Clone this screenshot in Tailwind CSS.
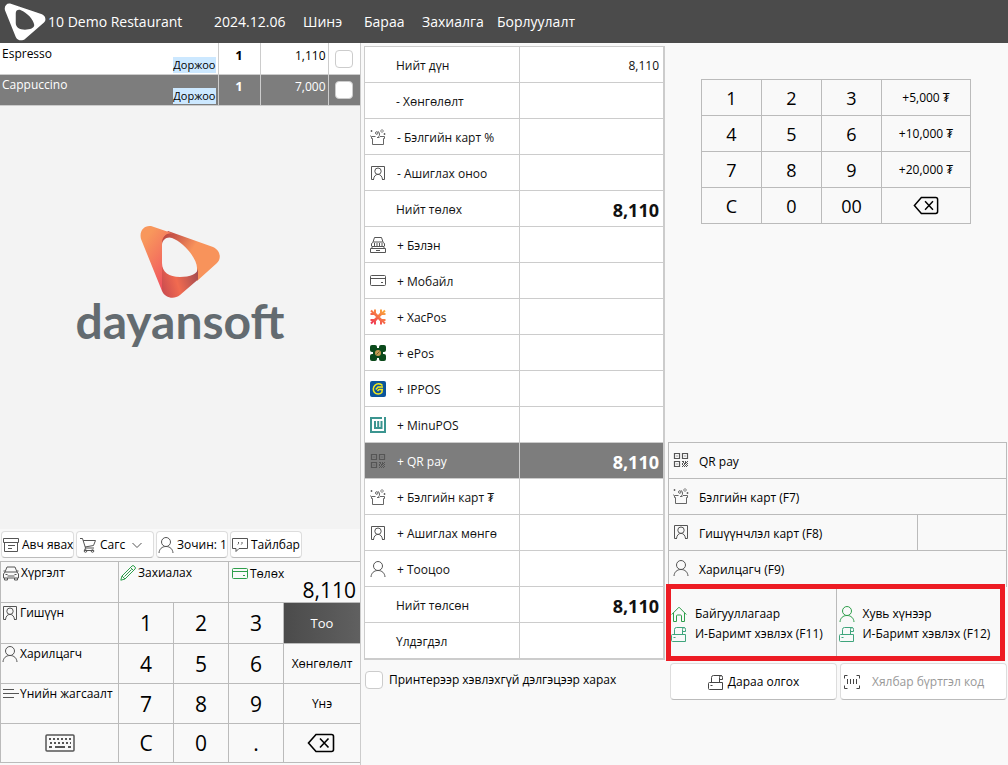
<!DOCTYPE html>
<html lang="mn">
  <head>
    <meta charset="UTF-8" />
    <meta name="viewport" content="width=device-width, initial-scale=1.0" />
    <title>10 Demo Restaurant - Төлбөр</title>
    <script src="https://cdn.jsdelivr.net/npm/@tailwindcss/browser@4"></script>
  </head>
  <body class="min-h-screen flex flex-col bg-[#f9f9f9] text-black text-[12px] leading-4 font-['Open_Sans','Noto_Sans',sans-serif]">
    <!-- Icons -->
    <svg class="hidden" fill="none">
      <symbol id="user" viewBox="0 0 16 16"><circle cx="8" cy="5" r="4.5" /><path d="M1 16c.3-4 3-6.500 7-6.500s6.700 2.500 7 6.500" /></symbol>
      <symbol id="member" viewBox="0 0 16 16"><path d="M4 14.500H1.500v-13h13v13H12" /><circle cx="8" cy="6.200" r="3.200" /><path d="M3.500 14.500c.4-3.200 2-5.100 4.500-5.100s4.100 1.900 4.500 5.100" /></symbol>
      <symbol id="gift" viewBox="0 0 16 16"><path d="M5.500 7.500H1.500v2h1v6h11v-6h1v-2H10M7 8.500h2.500M5.500 4c0-1.800 2.500-1.800 2.500 0s-2.500 1.800-2.500 0M8.500 8c1.500-1.500 1.500-5-.5-5.500" stroke-width=".9" /><path d="M12 .5L13.500 2 12 3.500 10.500 2zM1.500 1v2M.5 2h2M14.500 4v2M13.500 5h2M.5 6.500v1" stroke-width=".8" /></symbol>
      <symbol id="cash" viewBox="0 0 16 16"><path d="M3 5l1.500-4.500h7L13 5M.5 11.500h15v4H.5zM2 11.500v-2L1.500 9V6.500l2-1.500h9l2 1.500V9l-.5.5v2M2 9.500h12M4.500 6v3M7 6v3M9.500 6v3M12 6v3M6 13.500h4" /></symbol>
      <symbol id="card" viewBox="0 0 16 16"><path d="M1.500 2.500h13q1 0 1 1v8q0 1-1 1h-13q-1 0-1-1v-8q0-1 1-1zM.5 5.500h15M11 9.500h2" /></symbol>
      <symbol id="qr" viewBox="0 0 16 16"><path d="M1.500 1.500h5v5h-5zM9.500 1.500h5v5h-5zM1.500 9.500h5v5h-5z" stroke-width="1.200" /><path d="M3.500 4h1M11.500 4h1M3.500 12h1M9 9.500h2M12 9.500h1M14 9.500h1M10 10.500h1M12 10.500h2M9 11.500h1M11 11.500h2M14 11.500h1M9 12.500h1M11 12.500h1M13 12.500h1M10 13.500h1M12 13.500h1M14 13.500h1M9 14.500h1M11 14.500h1M13 14.500h1" /></symbol>
      <symbol id="printer" viewBox="0 0 16 16"><path d="M3.500 8.500v-5q0-2 2-2h8M11.500 8.500v-5q0-2 1.500-2t1.500 2v2h-3M1.500 8.500h13v7h-13q-1 0-1-1v-5q0-1 1-1zM2.500 11.500h2" /></symbol>
      <symbol id="home" viewBox="0 0 16 16"><path d="M.7 8.500L8 1.200l7.300 7.300M2.500 7v8.500h3V10q0-1 1-1h3q1 0 1 1v5.500h3V7" /></symbol>
      <symbol id="backspace" viewBox="0 0 28 20"><path d="M9 1.500h15.500q2 0 2 2v13q0 2-2 2H9L1.500 10zM13 5.500l8.500 9M21.500 5.500l-8.500 9" /></symbol>
      <symbol id="mark" viewBox="0 0 80 74"><path fill-rule="evenodd" d="M1 14C-1 6 4 0 11 1L73 22C80 25 82 33 77 38L40 70C34 75 25 73 22 66ZM22 20C22 14 27 12 32 14C43 18 57 32 58 43C58 49 50 52 40 52C29 52 22 47 22 39Z" /></symbol>
    </svg>

    <header class="h-[43px] flex items-center bg-[#4b4b4b] text-white text-[14px] font-normal">
      <svg class="w-[42px] h-[38px] ml-1 shrink-0" fill="white"><use href="#mark" /></svg>
      <span class="ml-0.5 w-[166px] whitespace-nowrap">10 Demo Restaurant</span>
      <span class="w-[89px]">2024.12.06</span>
      <nav class="flex">
        <a href="#" class="w-[61px]">Шинэ</a>
        <a href="#" class="w-[58px]">Бараа</a>
        <a href="#" class="w-[75px]">Захиалга</a>
        <a href="#">Борлуулалт</a>
      </nav>
    </header>

    <main class="flex-1 flex">
      <!-- Order -->
      <section class="w-[361px] shrink-0 flex flex-col border-r border-[#ccc]">
        <table class="w-full table-fixed border-collapse [&_td]:align-top [&_td]:p-0 [&_tr]:h-[31px] [&_tr]:border-b [&_tr]:border-[#ccc]">
          <colgroup><col class="w-[218px]" /><col class="w-[42px]" /><col class="w-[68px]" /><col /></colgroup>
          <tbody>
            <tr class="bg-white">
              <td><div class="h-[30px] flex justify-between pl-0.5 pr-0.5"><span class="pt-[3px]">Espresso</span><span class="self-end bg-[#cce8ff] h-4 leading-4 text-[11px]">Доржоо</span></div></td>
              <td class="border-l border-[#ccc] text-center font-bold text-[13px]"><div class="pt-1">1</div></td>
              <td class="border-l border-[#ccc] text-right"><div class="pt-[5px] pr-0.5">1,110</div></td>
              <td class="border-l border-[#ccc]"><input type="checkbox" aria-label="Espresso" class="block appearance-none size-[18px] mt-[7px] ml-1.5 rounded border border-[#ccc] bg-white" /></td>
            </tr>
            <tr class="bg-[#7d7d7d] text-white">
              <td><div class="h-[29px] flex justify-between pl-0.5 pr-0.5"><span class="pt-0.5">Cappuccino</span><span class="self-end bg-[#cce8ff] text-black h-4 leading-4 text-[11px]">Доржоо</span></div></td>
              <td class="border-l border-[#ccc] text-center font-bold text-[13px]"><div class="pt-[3px]">1</div></td>
              <td class="border-l border-[#ccc] text-right"><div class="pt-1 pr-0.5">7,000</div></td>
              <td class="border-l border-[#ccc]"><input type="checkbox" aria-label="Cappuccino" class="block appearance-none size-[18px] mt-1.5 ml-1.5 rounded border border-[#ccc] bg-white" /></td>
            </tr>
          </tbody>
        </table>

        <div class="flex-1 bg-[#f3f3f3] flex flex-col items-center pt-[119px]">
          <svg class="w-20 h-[74px]" viewBox="0 0 80 74">
            <defs>
              <linearGradient id="g1" x1="0" y1="0" x2=".7" y2="1"><stop offset=".2" stop-color="#f8975c" /><stop offset=".9" stop-color="#f0565f" /></linearGradient>
              <linearGradient id="g2" x1="0" y1="0" x2=".7" y2=".4"><stop offset="0" stop-color="#b5423f" /><stop offset=".3" stop-color="#c9574a" /><stop offset=".8" stop-color="#f8935b" /></linearGradient>
              <linearGradient id="g3" x1="0" y1=".6" x2="1" y2=".3"><stop offset="0" stop-color="#cf4f4f" /><stop offset=".4" stop-color="#f16b50" /><stop offset="1" stop-color="#a54c50" /></linearGradient>
            </defs>
            <path fill="url(#g2)" d="M21.500 27V14L28 6L73 22C80 25 82 33 77 38L57 56V43C57 33 43 17 32 13C27 11 22 15 22 20Z" />
            <path fill="url(#g3)" d="M22 38C22 47 29 52 40 52C50 52 58 49 58 43V54.500L40 70C34 75 25 73 22 66Z" />
            <path fill="url(#g1)" d="M1 14C-1 6 4 0 11 1L36 9.500C28 6 22 11 22 18V66Z" />
          </svg>
          <div class="-mt-1.5 text-[#636b70] text-[48px] leading-[56px] font-bold font-['Lato',sans-serif]">dayansoft</div>
        </div>

        <div class="flex items-center gap-0.5 px-px pt-0.5 pb-[3px] [&_button]:h-[27px] [&_button]:shrink-0 [&_button]:flex [&_button]:items-center [&_button]:whitespace-nowrap [&_button]:rounded [&_button]:border [&_button]:border-[#ddd] [&_button]:border-b-[#bbb] [&_button]:bg-white [&_svg]:size-4 [&_svg]:shrink-0 [&_svg]:stroke-[#555]">
          <button class="w-[73px] gap-[3px] pl-px"><svg viewBox="0 0 16 16" fill="none"><path d="M.5 1.500h15v4H.5zM1.500 5.500v9h13v-9M5 8.500h7M5 11.500h4" /></svg>Авч явах</button>
          <button class="w-[78px] gap-1 pl-[3px]"><svg viewBox="0 0 16 16" fill="none"><path d="M0 1.500h2.500l3 9.500h8.500M3.200 3.500h12.300l-2 5L5 10M5.500 11l-1 2.500h9" /><circle cx="5.500" cy="14" r="1.300" /><circle cx="12.500" cy="14" r="1.300" /></svg>Сагс<svg viewBox="0 0 16 16" fill="none"><path d="M3.500 6L8 10.500 12.500 6" /></svg></button>
          <button class="w-[72px] gap-[3px] pl-px"><svg fill="none"><use href="#user" /></svg>Зочин: 1</button>
          <button class="w-[72px] gap-[3px] pl-px"><svg viewBox="0 0 16 16" fill="none"><path d="M.5 1.500h15v10H7l-3 3v-3H.5zM6.500 5v1.500l-.7 1M10 5v1.500l-.7 1" /></svg>Тайлбар</button>
        </div>

        <div class="grid grid-cols-[118px_55px_55px_55px_1fr] grid-rows-[41px_41px_40px_40px_39px] mb-0.5 border-t border-[#bbb] text-[21px] [&>button]:border-l [&>button]:border-b [&>button]:border-[#bbb]">
          <button class="flex items-start pt-[3px] pl-0.5 gap-0.5 text-[12px]"><svg class="size-4 stroke-[#555]" viewBox="0 0 16 16" fill="none"><path d="M2 7l2-5h8l2 5M.5 6H2m12 0h1.500M2 7h12l1.500 2v4H.5V9zM1.500 13v2h3v-2M11.500 13v2h3v-2M4.500 11h7M2.500 9.500h2M11.500 9.500h2" /></svg>Хүргэлт</button>
          <button class="col-span-2 flex items-start pt-[3px] pl-px gap-0.5 text-[12px]"><svg class="size-4 stroke-[#2e9e4b]" viewBox="0 0 16 16" fill="none"><path d="M.8 15.200L2 11 12 1q1-1 2 0l1 1q1 1 0 2L5 14zM2 11l3 3M10.500 2.500l3 3M4.500 11.500l7-7" /></svg>Захиалах</button>
          <button class="col-span-2 flex flex-col text-[12px] pt-1 pl-[3px]"><span class="flex gap-0.5"><svg class="size-4 stroke-[#2e9e4b]" fill="none"><use href="#card" /></svg>Төлөх</span><span class="self-end pr-1 -mt-0.5 text-[21px] leading-5">8,110</span></button>
          <button class="flex items-start pt-0.5 pl-px gap-0.5 text-[12px]"><svg class="size-4 stroke-[#555]" fill="none"><use href="#member" /></svg>Гишүүн</button>
          <button>1</button><button>2</button><button>3</button>
          <button class="bg-linear-to-r from-[#4b4b4b] to-[#606060] text-white text-[13px]">Тоо</button>
          <button class="flex items-start pt-0.5 pl-px gap-0.5 text-[12px]"><svg class="size-4 stroke-[#555]" fill="none"><use href="#user" /></svg>Харилцагч</button>
          <button>4</button><button>5</button><button>6</button>
          <button class="text-[12px]">Хөнгөлөлт</button>
          <button class="flex items-start pt-0.5 pl-0.5 gap-px text-[12px] whitespace-nowrap"><svg class="size-4 shrink-0 stroke-[#555]" viewBox="0 0 16 16" fill="none"><path d="M0 3.500h11M0 7.500h16M0 11.500h11" /></svg>Үнийн жагсаалт</button>
          <button>7</button><button>8</button><button>9</button>
          <button class="text-[12px]">Үнэ</button>
          <button aria-label="Keyboard" class="flex items-center justify-center"><svg class="w-[30px] h-[18px] stroke-[#555]" viewBox="0 0 30 18" fill="none"><rect x="1" y="1" width="28" height="16" rx="1" stroke-width="1.500" /><path stroke-width="2" stroke-dasharray="2 2" d="M4 5h22M5 9h21" /><path stroke-width="2" d="M4 13h3M10 13h10M23 13h3" /></svg></button>
          <button>C</button><button>0</button><button>.</button>
          <button aria-label="Backspace" class="flex items-center justify-center pr-0.5"><svg class="w-7 h-5 stroke-black stroke-[1.6]" fill="none"><use href="#backspace" /></svg></button>
        </div>
      </section>

      <!-- Payment -->
      <section class="w-[304px] shrink-0 pl-[3px] pt-[3px]">
        <table class="w-full table-fixed border-separate border-spacing-0 bg-white border-t border-l border-r-2 border-b border-[#ccc] text-[#111] [&_tr]:h-9 [&_td]:p-0 [&_td]:pt-0.5 [&_td]:border-b [&_td]:border-[#ccc] [&_td+td]:border-l [&_td+td]:text-right [&_td+td]:pr-1 [&_tr>td:first-child]:pl-[31px] [&_td:has(svg)]:pl-[5px]! [&_td>div]:flex [&_td>div]:items-center [&_td>div]:gap-[11px] [&_svg]:size-4 [&_svg]:shrink-0 [&_svg]:-mt-0.5">
          <colgroup><col class="w-[154px]" /><col /></colgroup>
          <tbody>
            <tr><td>Нийт дүн</td><td>8,110</td></tr>
            <tr><td>- Хөнгөлөлт</td><td></td></tr>
            <tr><td><div><svg class="stroke-[#555]" fill="none"><use href="#gift" /></svg>- Бэлгийн карт %</div></td><td></td></tr>
            <tr><td><div><svg class="stroke-[#555]" fill="none"><use href="#member" /></svg>- Ашиглах оноо</div></td><td></td></tr>
            <tr><td>Нийт төлөх</td><td class="text-[18px] font-bold">8,110</td></tr>
            <tr><td><div><svg class="stroke-[#555]" fill="none"><use href="#cash" /></svg>+ Бэлэн</div></td><td></td></tr>
            <tr><td><div><svg class="stroke-[#555]" fill="none"><use href="#card" /></svg>+ Мобайл</div></td><td></td></tr>
            <tr><td><div><svg viewBox="0 0 16 16" fill="none" stroke="url(#xac)" stroke-width="2.600" stroke-linejoin="round"><defs><linearGradient id="xac" gradientUnits="userSpaceOnUse" x1="14" y1="0" x2="2" y2="16"><stop stop-color="#fbb03b" /><stop offset="1" stop-color="#ef2f56" /></linearGradient></defs><path d="M1 1.500L4.500 5H.5M5 .5v4l6 7v4M11 .5v4l-6 7v4M15 1.500L11.500 5h4M1 14.500L4.500 11H.5M15 14.500L11.500 11h4" stroke-width="2" /><path d="M5 5l6 6M11 5l-6 6" /></svg>+ XacPos</div></td><td></td></tr>
            <tr><td><div><svg viewBox="0 0 16 16"><g fill="#0b4a1b"><rect width="7" height="7" rx="2" /><rect x="9" width="7" height="7" rx="2" /><rect y="9" width="7" height="7" rx="2" /><rect x="9" y="9" width="7" height="7" rx="2" /><rect x="3" y="3" width="10" height="10" /></g><circle cx="8" cy="8" r="3" fill="#c49a52" /><path stroke="#6b6a2a" d="M6.500 9.500l3-3" /></svg>+ ePos</div></td><td></td></tr>
            <tr><td><div><svg viewBox="0 0 16 16"><rect width="16" height="16" rx="2" fill="#0b559c" /><path fill="none" stroke="#f3ea1c" stroke-width="1.500" d="M12.500 4.500C10.500 2.300 7 2.300 5 4.200S2.700 9.500 4.500 11.500s5.500 2 7.300 0l.5-3H9L7.500 10M13 6H8L5.800 8.500" /></svg>+ IPPOS</div></td><td></td></tr>
            <tr><td><div><svg viewBox="0 0 16 16" fill="none" stroke="#3b9590" stroke-width="2"><path d="M12 1H1v14h14V0M5 4v7h6.500V4M8.200 4v7" /></svg>+ MinuPOS</div></td><td></td></tr>
            <tr class="bg-[#7d7d7d] text-white"><td><div><svg class="stroke-[#555]" fill="none"><use href="#qr" /></svg>+ QR pay</div></td><td class="text-[18px] font-bold">8,110</td></tr>
            <tr><td><div><svg class="stroke-[#555]" fill="none"><use href="#gift" /></svg>+ Бэлгийн карт ₮</div></td><td></td></tr>
            <tr><td><div><svg class="stroke-[#555]" fill="none"><use href="#member" /></svg>+ Ашиглах мөнгө</div></td><td></td></tr>
            <tr><td><div><svg class="stroke-[#555]" fill="none"><use href="#user" /></svg>+ Тооцоо</div></td><td></td></tr>
            <tr><td>Нийт төлсөн</td><td class="text-[18px] font-bold">8,110</td></tr>
            <tr><td>Үлдэгдэл</td><td></td></tr>
          </tbody>
        </table>
        <label class="flex items-center gap-1.5 mt-[11px] ml-px whitespace-nowrap"><input type="checkbox" class="appearance-none size-[18px] rounded border border-[#ccc] bg-white" />Принтерээр хэвлэхгүй дэлгэцээр харах</label>
      </section>

      <!-- Cash keypad and actions -->
      <section class="flex-1 min-w-0 flex flex-col pr-px">
        <div class="grid grid-cols-[60px_60px_60px_89px] auto-rows-[36px] self-start ml-9 mt-9 border-t border-l border-[#bbb] text-[18px] [&>button]:border-r [&>button]:border-b [&>button]:border-[#bbb]">
          <button>1</button><button>2</button><button>3</button><button class="text-[12px]">+5,000 ₮</button>
          <button>4</button><button>5</button><button>6</button><button class="text-[12px]">+10,000 ₮</button>
          <button>7</button><button>8</button><button>9</button><button class="text-[12px]">+20,000 ₮</button>
          <button>C</button><button>0</button><button>00</button>
          <button aria-label="Backspace" class="flex items-center justify-center"><svg class="w-[26px] h-[19px] stroke-black stroke-[1.6]" fill="none"><use href="#backspace" /></svg></button>
        </div>

        <div class="mt-[218px] ml-[3px] border-t border-l border-r border-[#bbb] [&>button]:h-9 [&_button]:w-full [&_button]:flex [&_button]:items-center [&_button]:gap-2.5 [&_button]:pt-0.5 [&_button]:pl-1 [&_svg]:size-4 [&_svg]:-mt-1 [&_svg]:stroke-[#555]">
          <button class="border-b border-[#bbb]"><svg fill="none"><use href="#qr" /></svg>QR pay</button>
          <button class="border-b border-[#bbb]"><svg fill="none"><use href="#gift" /></svg>Бэлгийн карт (F7)</button>
          <div class="h-9 flex border-b border-[#bbb]">
            <button><svg fill="none"><use href="#member" /></svg>Гишүүнчлэл карт (F8)</button>
            <input type="text" aria-label="Гишүүнчлэл карт" class="w-[89px] shrink-0 px-2 border-l border-[#bbb]" />
          </div>
          <button><svg fill="none"><use href="#user" /></svg>Харилцагч (F9)</button>
        </div>

        <div class="ml-px mr-0.5 -mt-[3px] h-[77px] grid grid-cols-2 border-5 border-[#ed1c24] [&_span]:flex [&_span]:items-center [&_span]:gap-2 [&_svg]:size-4 [&_button]:flex [&_button]:flex-col [&_button]:justify-center [&_button]:gap-1 [&_button]:pt-0.5 [&_button]:whitespace-nowrap">
          <button>
            <span><svg class="stroke-[#2e9e4b]" fill="none"><use href="#home" /></svg>Байгууллагаар</span>
            <span><svg class="stroke-[#3fa57c]" fill="none"><use href="#printer" /></svg>И-Баримт хэвлэх (F11)</span>
          </button>
          <button class="border-l border-[#bbb] pl-0.5">
            <span><svg class="stroke-[#2e9e4b]" fill="none"><use href="#user" /></svg>Хувь хүнээр</span>
            <span><svg class="stroke-[#3fa57c]" fill="none"><use href="#printer" /></svg>И-Баримт хэвлэх (F12)</span>
          </button>
        </div>

        <div class="mt-0.5 ml-[5px] grid grid-cols-2 gap-[3px] [&_button]:h-[37px] [&_button]:flex [&_button]:items-center [&_button]:rounded [&_button]:border [&_button]:border-[#ddd] [&_button]:border-b-[#bbb] [&_button]:bg-white [&_svg]:size-4 [&_svg]:stroke-[#444]">
          <button class="justify-center gap-1"><svg fill="none"><use href="#printer" /></svg>Дараа олгох</button>
          <button class="gap-3 pl-[3px] text-[#999]"><svg viewBox="0 0 16 16" fill="none"><path d="M3.500 1.500h-3v3M12.500 1.500h3v3M3.500 14.500h-3v-3M12.500 14.500h3v-3M3.500 5v5M6.500 5v5M9.500 5v5M12.500 5v5" /></svg>Хялбар бүртгэл код</button>
        </div>
      </section>
    </main>
  </body>
</html>
